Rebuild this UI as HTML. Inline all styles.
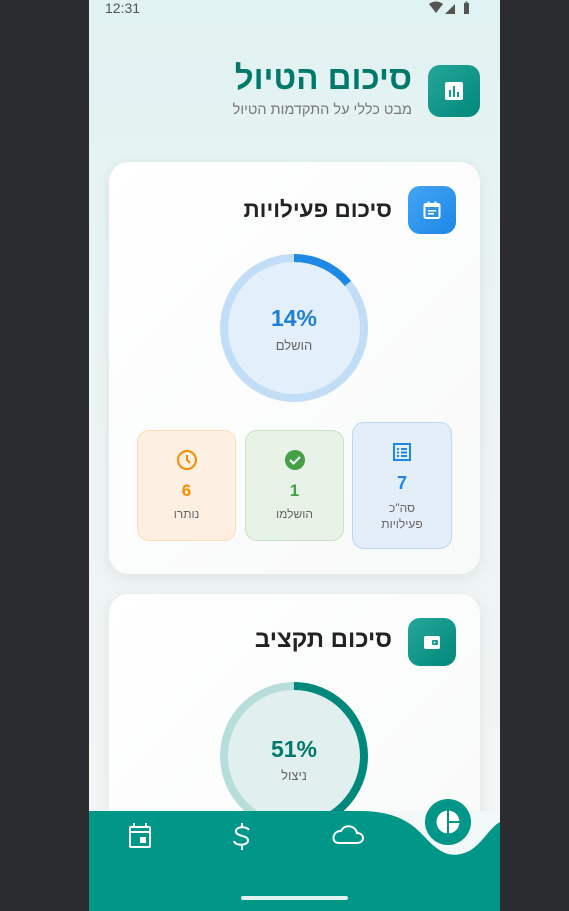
<!DOCTYPE html>
<html><head><meta charset="utf-8"><style>
*{margin:0;padding:0;box-sizing:border-box}
body{width:569px;height:911px;background:#2b2c30;position:relative;overflow:hidden;font-family:"Liberation Sans","Noto Sans CJK JP",sans-serif}
#ph{position:absolute;left:89px;top:0;width:411px;height:911px;background:linear-gradient(180deg,#e0f2f1 0%,#ecf4f3 40%,#f3f5f5 100%);overflow:hidden}
.abs{position:absolute}
.card{position:absolute;left:20px;width:371px;background:linear-gradient(135deg,#fff,#f8f9f9);border-radius:20px;box-shadow:0 4px 16px rgba(0,0,0,.07)}
.ib{position:absolute;border-radius:12px;display:flex;align-items:center;justify-content:center}
.t{position:absolute;direction:rtl;text-align:right;white-space:nowrap}
.box{position:absolute;border-radius:12px;text-align:center;direction:rtl}
</style></head><body>
<div id="ph">
<div class="abs" style="left:16px;top:0;font-size:14px;color:#555">12:31</div>
<svg class="abs" style="left:340px;top:1px" width="42" height="14" viewBox="0 0 42 14"><path d="M0 3 Q7 -2 14 3 L7 12Z" fill="#555"/><path d="M16 13 L26 3 V13Z" fill="#555"/><rect x="35" y="2" width="5" height="11" fill="#555"/><rect x="36.5" y="0.5" width="2" height="2" fill="#555"/></svg>

<div class="ib" style="left:339px;top:65px;width:52px;height:52px;background:linear-gradient(135deg,#26a69a,#00897b)">
<svg width="20" height="20" viewBox="0 0 20 20"><rect x="1" y="1" width="18" height="18" rx="2" fill="#fff"/><rect x="5" y="9" width="2" height="7" fill="#139a8c"/><rect x="9" y="5" width="2" height="11" fill="#139a8c"/><rect x="13" y="11" width="2" height="5" fill="#139a8c"/></svg></div>
<div class="t" style="right:88px;top:59px;font-size:33px;font-weight:bold;color:#00796b">סיכום הטיול</div>
<div class="t" style="right:88px;top:102px;font-size:14.5px;color:#777">מבט כללי על התקדמות הטיול</div>

<div class="card" style="top:162px;height:412px">
<div class="ib" style="left:299px;top:24px;width:48px;height:48px;background:linear-gradient(135deg,#42a5f5,#1e88e5)">
<svg width="20" height="20" viewBox="0 0 20 20"><rect x="2.5" y="4" width="15" height="14" rx="1.5" fill="none" stroke="#fff" stroke-width="2"/><rect x="2.5" y="4" width="15" height="3" fill="#fff"/><rect x="5.5" y="1.5" width="2" height="4" fill="#fff"/><rect x="12.5" y="1.5" width="2" height="4" fill="#fff"/><rect x="6" y="10" width="8" height="1.6" fill="#fff"/><rect x="6" y="13" width="6" height="1.6" fill="#fff"/></svg></div>
<div class="t" style="right:88px;top:35px;font-size:22.5px;font-weight:bold;color:#222">סיכום פעילויות</div>
<svg class="abs" style="left:111px;top:92px" width="148" height="148" viewBox="0 0 148 148">
<circle cx="74" cy="74" r="70" fill="#e3effa"/>
<circle cx="74" cy="74" r="70" fill="none" stroke="#c2ddf6" stroke-width="8"/>
<circle cx="74" cy="74" r="70" fill="none" stroke="#1e88e5" stroke-width="8" stroke-dasharray="61.6 500" transform="rotate(-90 74 74)"/>
</svg>
<div class="abs" style="left:111px;top:143px;width:148px;text-align:center;font-size:23px;font-weight:bold;color:#1e7fd8">14%</div>
<div class="abs" style="left:111px;top:176px;width:148px;text-align:center;font-size:13px;color:#666;direction:rtl">הושלם</div>

<div class="box" style="left:28px;top:268px;width:99px;height:111px;background:#fdf0e3;border:1px solid #fbdcb5">
<svg style="margin-top:18px" width="22" height="22" viewBox="0 0 22 22"><circle cx="11" cy="11" r="9" fill="none" stroke="#fb8c00" stroke-width="2"/><path d="M11 6 V11 L14 14" fill="none" stroke="#fb8c00" stroke-width="2"/></svg>
<div style="font-size:17px;font-weight:bold;color:#fb8c00;margin-top:5px">6</div>
<div style="font-size:12px;color:#666;margin-top:6px">נותרו</div></div>
<div class="box" style="left:136px;top:268px;width:99px;height:111px;background:#e8f2e6;border:1px solid #c8e2c4">
<svg style="margin-top:18px" width="22" height="22" viewBox="0 0 22 22"><circle cx="11" cy="11" r="10" fill="#43a047"/><path d="M6 11 L9.5 14.5 L16 8" fill="none" stroke="#fff" stroke-width="2"/></svg>
<div style="font-size:17px;font-weight:bold;color:#43a047;margin-top:5px">1</div>
<div style="font-size:12px;color:#666;margin-top:6px">הושלמו</div></div>
<div class="box" style="left:243px;top:260px;width:100px;height:127px;background:#e3eef9;border:1px solid #bcd7f1">
<svg style="margin-top:19px" width="20" height="20" viewBox="0 0 20 20"><rect x="2" y="2" width="16" height="16" fill="none" stroke="#1e88e5" stroke-width="2"/><rect x="5" y="6" width="2" height="2" fill="#1e88e5"/><rect x="9" y="6" width="6" height="2" fill="#1e88e5"/><rect x="5" y="9.5" width="2" height="2" fill="#1e88e5"/><rect x="9" y="9.5" width="6" height="2" fill="#1e88e5"/><rect x="5" y="13" width="2" height="2" fill="#1e88e5"/><rect x="9" y="13" width="6" height="2" fill="#1e88e5"/></svg>
<div style="font-size:18px;font-weight:bold;color:#1e88e5;margin-top:6px">7</div>
<div style="font-size:12px;color:#666;margin-top:6px;line-height:16px">סה"כ<br>פעילויות</div></div>
</div>

<div class="card" style="top:594px;height:340px">
<div class="ib" style="left:299px;top:24px;width:48px;height:48px;background:linear-gradient(135deg,#26a69a,#00897b)">
<svg width="20" height="20" viewBox="0 0 20 20"><rect x="2" y="4" width="16" height="13" rx="2" fill="#fff"/><rect x="10" y="8" width="6" height="5" rx="1" fill="#139a8c"/><circle cx="12.5" cy="10.5" r="1" fill="#fff"/></svg></div>
<div class="t" style="right:88px;top:32px;font-size:24px;font-weight:bold;color:#222">סיכום תקציב</div>
<svg class="abs" style="left:111px;top:88px" width="148" height="148" viewBox="0 0 148 148">
<circle cx="74" cy="74" r="70" fill="#e1f0ef"/>
<circle cx="74" cy="74" r="70" fill="none" stroke="#b8dedb" stroke-width="8"/>
<circle cx="74" cy="74" r="70" fill="none" stroke="#00897b" stroke-width="8" stroke-dasharray="224.3 500" transform="rotate(-90 74 74)"/>
</svg>
<div class="abs" style="left:111px;top:142px;width:148px;text-align:center;font-size:23px;font-weight:bold;color:#00796b">51%</div>
<div class="abs" style="left:111px;top:174px;width:148px;text-align:center;font-size:13px;color:#666;direction:rtl">ניצול</div>
</div>

<svg class="abs" style="left:0;top:790px" width="411" height="121" viewBox="0 0 411 121">
<rect x="260" y="21" width="151" height="60" fill="#f2f8f7"/>
<path d="M0 21 H270 C320 21 330 43 345 56 C358 67 368 66 378 62 C392 56 400 38 411 32 V121 H0Z" fill="#009688"/>
<circle cx="359" cy="32" r="23" fill="#009688"/>
<circle cx="359" cy="32" r="11.5" fill="#fff"/>
<path d="M359 20 V44 M359 32 H371" stroke="#009688" stroke-width="2"/>
<rect x="152" y="106" width="107" height="4" rx="2" fill="#e0f2f1"/>
<g fill="none" stroke="#fff" stroke-width="2">
<rect x="41" y="37" width="20" height="20" rx="1"/><path d="M45 33 V38 M57 33 V38 M41 42 H61"/>
<path d="M160 40 C158 36 146 36 147 42 C148 47 160 45 159 51 C158 56 146 56 145 51 M153 33 V37 M153 56 V60"/>
<path d="M250 53 H268 C276 53 276 43 268 43 C267 36 256 33 252 41 C244 40 241 53 250 53Z"/>
</g>
<rect x="51" y="47" width="6" height="6" fill="#fff"/>
</svg>
</div>
</body></html>
